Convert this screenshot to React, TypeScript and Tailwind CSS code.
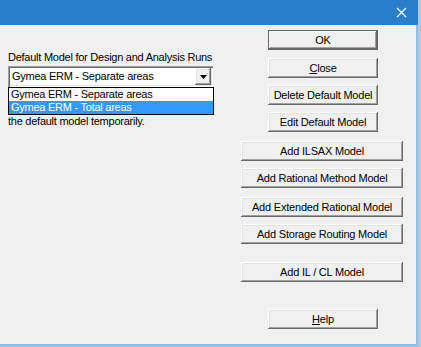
import React from "react";

const raised =
  "shadow-[inset_-1px_-1px_0_#696969,inset_1px_1px_0_#ffffff,inset_-2px_-2px_0_#a0a0a0,inset_2px_2px_0_#e3e3e3]";

function Btn({
  label,
  mn,
  wide,
  def,
  className,
}: {
  label: string;
  mn?: number;
  wide?: boolean;
  def?: boolean;
  className?: string;
}) {
  const text =
    mn === undefined ? (
      label
    ) : (
      <>
        {label.slice(0, mn)}
        <span className="underline underline-offset-[1px]">{label[mn]}</span>
        {label.slice(mn + 1)}
      </>
    );
  return (
    <div
      className={[
        "flex h-[20px] items-center justify-center bg-[#f0f0f0] text-[11px] leading-none tracking-[-0.2px] text-black",
        wide ? "w-[162px]" : "ml-[27px] w-[110px]",
        def
          ? "border border-[#646464] shadow-[inset_-1px_-1px_0_#696969,inset_1px_1px_0_#ffffff,inset_-2px_-2px_0_#a0a0a0]"
          : raised,
        className || "",
      ].join(" ")}
    >
      {text}
    </div>
  );
}

export default function App() {
  return (
    <div
      className="flex h-[347px] w-[421px] flex-col overflow-hidden bg-[#b9c6d3]"
      style={{ fontFamily: '"Liberation Sans", Arial, sans-serif' }}
    >
      <div className="flex h-[346px] w-[418px] flex-col">
        <div className="flex h-[25px] shrink-0 items-center justify-end bg-[#2a7fcd] pr-[11px]">
          <svg width="11" height="11" viewBox="0 0 11 11">
            <path d="M1 1 L10 10 M10 1 L1 10" stroke="#ffffff" strokeWidth="1.3" />
          </svg>
        </div>
        <div className="flex flex-1 border-r-2 border-b-2 border-[#8cbce8] bg-[#f0f0f0]">
          <div className="flex w-[241px] flex-col pl-[8px] pt-[26px] tracking-[-0.25px]">
            <div className="text-[11px] leading-[13px] text-black">
              Default Model for Design and Analysis Runs
            </div>
            <div className="mt-[2px] flex h-[21px] w-[205px] items-center bg-white pl-[4px] pr-[2px] text-[11px] shadow-[inset_1px_1px_0_#a0a0a0,inset_2px_2px_0_#696969,inset_-1px_-1px_0_#ffffff,inset_-2px_-2px_0_#e3e3e3]">
              <span className="flex-1">Gymea ERM - Separate areas</span>
              <div
                className={
                  "flex h-[17px] w-[16px] items-center justify-center bg-[#f0f0f0] " +
                  raised
                }
              >
                <svg width="7" height="4" viewBox="0 0 7 4">
                  <path d="M0 0 H7 L3.5 4 Z" fill="#000" />
                </svg>
              </div>
            </div>
            <div className="w-[206px] border border-black bg-white text-[11px] leading-[13px]">
              <div className="pl-[2px] text-black">Gymea ERM - Separate areas</div>
              <div className="bg-[#3399ff] pl-[2px] text-white">Gymea ERM - Total areas</div>
            </div>
            <div className="text-[11px] leading-[12px] text-black">
              the default model temporarily.
            </div>
          </div>
          <div className="flex w-[162px] flex-col items-start pt-[5px]">
            <Btn label="OK" def />
            <Btn label="Close" mn={0} className="mt-[8px]" />
            <Btn label="Delete Default Model" className="mt-[7px]" />
            <Btn label="Edit Default Model" className="mt-[7px]" />
            <Btn label="Add ILSAX Model" wide className="mt-[9px]" />
            <Btn label="Add Rational Method Model" wide className="mt-[7px]" />
            <Btn label="Add Extended Rational Model" wide className="mt-[9px]" />
            <Btn label="Add Storage Routing Model" wide className="mt-[7px]" />
            <Btn label="Add IL / CL Model" wide className="mt-[18px]" />
            <Btn label="Help" mn={0} className="mt-[27px]" />
          </div>
        </div>
      </div>
    </div>
  );
}
